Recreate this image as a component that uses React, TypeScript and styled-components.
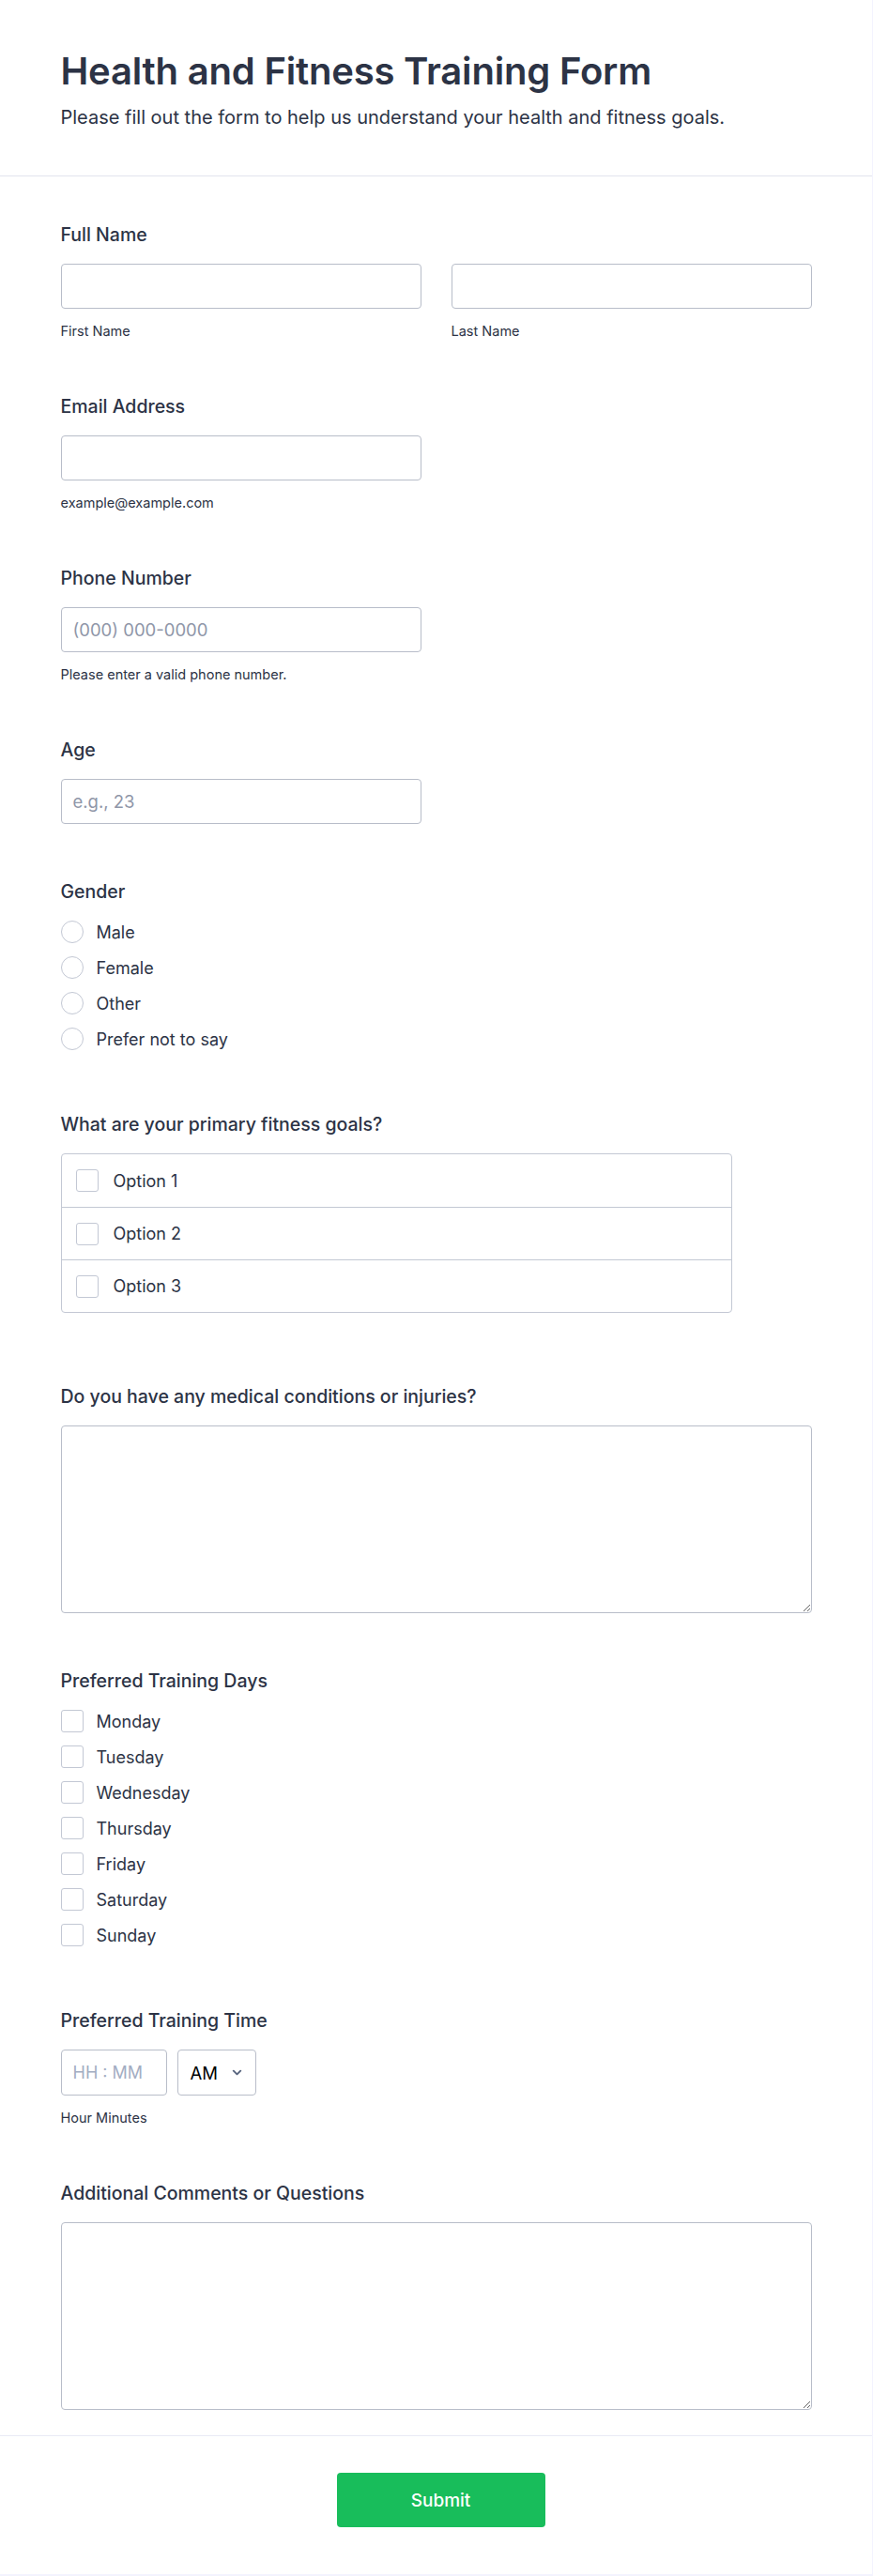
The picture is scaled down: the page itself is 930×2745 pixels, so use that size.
import React from "react";
import styled, { createGlobalStyle } from "styled-components";
import { ChevronDown } from "lucide-react";

const GlobalStyle = createGlobalStyle`
  html, body {
    margin: 0;
    padding: 0;
    background: #f3f3fe;
  }
  * {
    box-sizing: border-box;
  }
  body {
    font-family: Inter, "Noto Sans", "Liberation Sans", sans-serif;
    color: #2c3345;
  }
`;

const days = ["Monday", "Tuesday", "Wednesday", "Thursday", "Friday", "Saturday", "Sunday"];
const genders = ["Male", "Female", "Other", "Prefer not to say"];
const goals = ["Option 1", "Option 2", "Option 3"];

const App: React.FC = () => {
  return (
    <>
      <GlobalStyle />
      <Card>
        <Header>
          <Inner>
            <Title>Health and Fitness Training Form</Title>
            <Subtitle>
              Please fill out the form to help us understand your health and fitness goals.
            </Subtitle>
          </Inner>
        </Header>

        <Body>
          <Inner>
            <Field>
              <Label>Full Name</Label>
              <Columns>
                <div>
                  <TextInput type="text" />
                  <SubLabel>First Name</SubLabel>
                </div>
                <div>
                  <TextInput type="text" />
                  <SubLabel>Last Name</SubLabel>
                </div>
              </Columns>
            </Field>

            <Field>
              <Label>Email Address</Label>
              <TextInput type="email" half />
              <SubLabel>example@example.com</SubLabel>
            </Field>

            <Field>
              <Label>Phone Number</Label>
              <TextInput type="tel" half placeholder="(000) 000-0000" />
              <SubLabel>Please enter a valid phone number.</SubLabel>
            </Field>

            <Field>
              <Label>Age</Label>
              <TextInput type="text" half placeholder="e.g., 23" />
            </Field>

            <Field>
              <Label tight>Gender</Label>
              <ChoiceList>
                {genders.map((g) => (
                  <ChoiceRow key={g}>
                    <Radio />
                    <ChoiceText>{g}</ChoiceText>
                  </ChoiceRow>
                ))}
              </ChoiceList>
            </Field>

            <Field extra={17}>
              <Label>What are your primary fitness goals?</Label>
              <GoalBox>
                {goals.map((o) => (
                  <GoalRow key={o}>
                    <Box />
                    <ChoiceText>{o}</ChoiceText>
                  </GoalRow>
                ))}
              </GoalBox>
            </Field>

            <Field>
              <Label>Do you have any medical conditions or injuries?</Label>
              <TextArea />
            </Field>

            <Field>
              <Label tight>Preferred Training Days</Label>
              <ChoiceList>
                {days.map((d) => (
                  <ChoiceRow key={d}>
                    <Box />
                    <ChoiceText>{d}</ChoiceText>
                  </ChoiceRow>
                ))}
              </ChoiceList>
            </Field>

            <Field>
              <Label>Preferred Training Time</Label>
              <TimeRow>
                <TimeInput type="text" placeholder="HH : MM" />
                <AmPm>
                  AM
                  <ChevronDown size={15} strokeWidth={3} color="#57647e" />
                </AmPm>
              </TimeRow>
              <SubLabel>Hour Minutes</SubLabel>
            </Field>

            <Field last>
              <Label>Additional Comments or Questions</Label>
              <TextArea />
            </Field>
          </Inner>
        </Body>

        <Footer>
          <SubmitButton type="button">Submit</SubmitButton>
        </Footer>
      </Card>
    </>
  );
};

export default App;

const Card = styled.div`
  width: calc(100% - 1px);
  background: #ffffff;
  margin-bottom: 2px;
`;

const Inner = styled.div`
  width: 800px;
  margin: 0 auto;
`;

const Header = styled.header`
  padding: 52px 0 49px;
  border-bottom: 1px solid #e2e4ee;
`;

const Title = styled.h1`
  margin: 0;
  font-size: 40px;
  line-height: 48px;
  font-weight: 600;
  color: #2c3345;
  letter-spacing: -0.2px;
`;

const Subtitle = styled.p`
  margin: 12px 0 0;
  font-size: 20px;
  line-height: 26px;
  color: #2c3345;
`;

const Body = styled.main`
  padding: 52px 0 27px;
  border-bottom: 1px solid #e9eaf5;
`;

const Field = styled.section<{ last?: boolean; extra?: number }>`
  display: flex;
  flex-direction: column;
  margin-bottom: ${({ last, extra }) => (last ? 0 : 62 + (extra ?? 0))}px;
`;

const Label = styled.label<{ tight?: boolean }>`
  display: block;
  font-size: 19.5px;
  line-height: 20px;
  font-weight: 500;
  color: #2c3345;
  margin-bottom: ${({ tight }) => (tight ? 14 : 21)}px;
`;

const Columns = styled.div`
  display: grid;
  grid-template-columns: 1fr 1fr;
  gap: 32px;
`;

const TextInput = styled.input<{ half?: boolean }>`
  display: block;
  width: ${({ half }) => (half ? "384px" : "100%")};
  height: 48px;
  padding: 0 12px;
  border: 1px solid #b8bdc9;
  border-radius: 4px;
  background: #fff;
  font-family: inherit;
  font-size: 18.5px;
  color: #2c3345;
  outline: none;
  &::placeholder {
    color: #8f96a8;
  }
`;

const SubLabel = styled.div`
  margin-top: 16px;
  font-size: 14.5px;
  line-height: 16px;
  color: #2c3345;
`;

const ChoiceList = styled.div`
  display: flex;
  flex-direction: column;
`;

const ChoiceRow = styled.div`
  display: flex;
  align-items: center;
  height: 38px;
  gap: 14px;
`;

const Radio = styled.span`
  width: 24px;
  height: 24px;
  border-radius: 50%;
  border: 1px solid #c3c8d4;
  background: #fff;
  flex-shrink: 0;
`;

const Box = styled.span`
  width: 24px;
  height: 24px;
  border-radius: 3px;
  border: 1px solid #c3c8d4;
  background: #fff;
  flex-shrink: 0;
`;

const ChoiceText = styled.span`
  font-size: 18px;
  color: #2c3345;
`;

const GoalBox = styled.div`
  width: 715px;
  border: 1px solid #c3c8d4;
  border-radius: 4px;
  overflow: hidden;
`;

const GoalRow = styled.div`
  display: flex;
  align-items: center;
  gap: 16px;
  height: 56px;
  padding: 0 15px;
  & + & {
    border-top: 1px solid #c3c8d4;
  }
`;

const TextArea = styled.textarea`
  display: block;
  width: 100%;
  height: 200px;
  padding: 10px 12px;
  border: 1px solid #b8bdc9;
  border-radius: 4px;
  font-family: inherit;
  font-size: 18px;
  color: #2c3345;
  outline: none;
  resize: vertical;
`;

const TimeRow = styled.div`
  display: flex;
  gap: 11px;
`;

const TimeInput = styled.input`
  width: 113px;
  height: 49px;
  padding: 0 12px;
  border: 1px solid #b8bdc9;
  border-radius: 4px;
  font-family: inherit;
  font-size: 18px;
  color: #2c3345;
  outline: none;
  &::placeholder {
    color: #a3adc2;
  }
`;

const AmPm = styled.div`
  width: 84px;
  height: 49px;
  display: flex;
  align-items: center;
  justify-content: space-between;
  padding: 0 12px 0 13px;
  border: 1px solid #b8bdc9;
  border-radius: 4px;
  font-size: 18.5px;
  color: #000;
`;

const Footer = styled.footer`
  display: flex;
  justify-content: center;
  padding: 39px 0 50px 10px;
`;

const SubmitButton = styled.button`
  width: 222px;
  height: 58px;
  border: none;
  border-radius: 4px;
  background: #18bd5b;
  color: #fff;
  font-family: inherit;
  font-size: 19px;
  font-weight: 500;
  cursor: pointer;
`;
